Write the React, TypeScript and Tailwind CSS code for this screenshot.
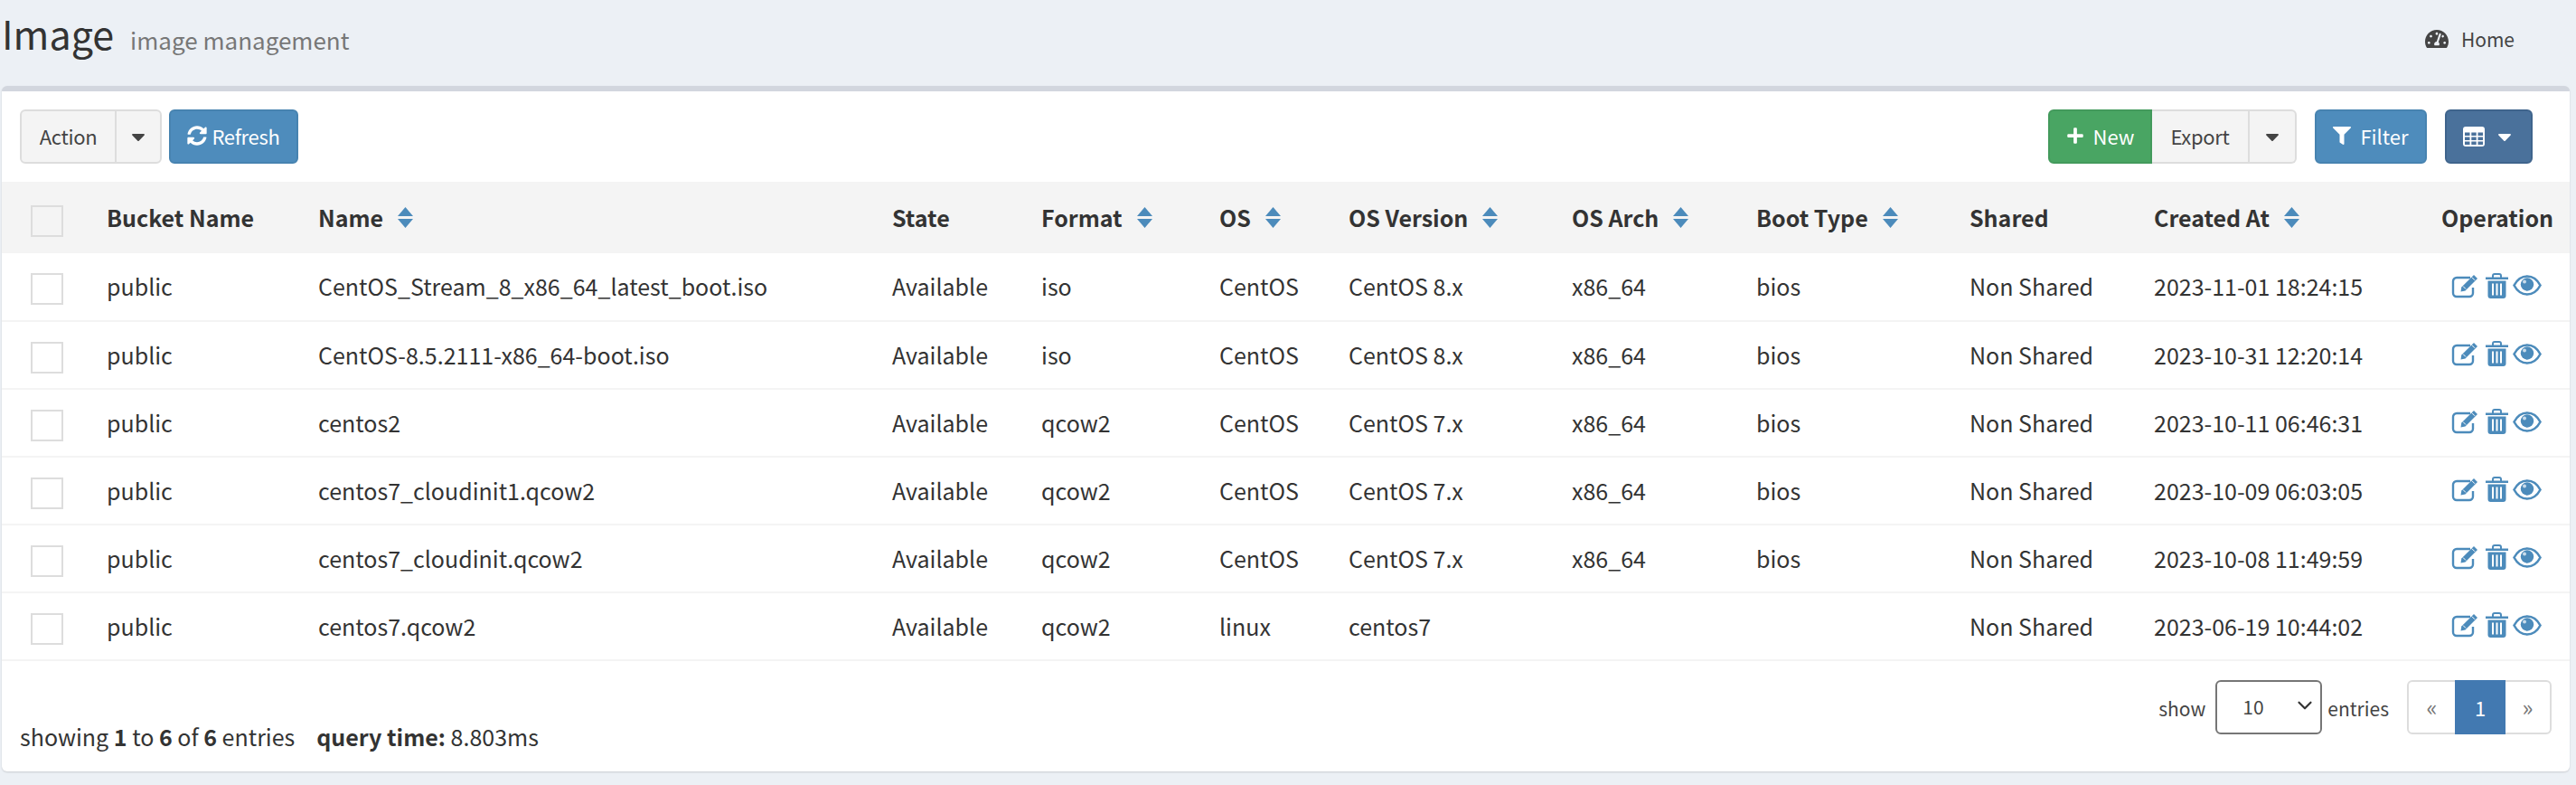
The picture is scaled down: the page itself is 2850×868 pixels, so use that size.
import { ChevronDown } from 'lucide-react';
import { FaCaretDown, FaFilter, FaPlus, FaSyncAlt, FaTachometerAlt } from 'react-icons/fa';

const FONT = "font-['Noto_Sans_CJK_SC','Noto_Sans',sans-serif]";

type Row = {
  name: string;
  format: string;
  os: string;
  version: string;
  arch: string;
  boot: string;
  created: string;
};

const rows: Row[] = [
  { name: 'CentOS_Stream_8_x86_64_latest_boot.iso', format: 'iso', os: 'CentOS', version: 'CentOS 8.x', arch: 'x86_64', boot: 'bios', created: '2023-11-01 18:24:15' },
  { name: 'CentOS-8.5.2111-x86_64-boot.iso', format: 'iso', os: 'CentOS', version: 'CentOS 8.x', arch: 'x86_64', boot: 'bios', created: '2023-10-31 12:20:14' },
  { name: 'centos2', format: 'qcow2', os: 'CentOS', version: 'CentOS 7.x', arch: 'x86_64', boot: 'bios', created: '2023-10-11 06:46:31' },
  { name: 'centos7_cloudinit1.qcow2', format: 'qcow2', os: 'CentOS', version: 'CentOS 7.x', arch: 'x86_64', boot: 'bios', created: '2023-10-09 06:03:05' },
  { name: 'centos7_cloudinit.qcow2', format: 'qcow2', os: 'CentOS', version: 'CentOS 7.x', arch: 'x86_64', boot: 'bios', created: '2023-10-08 11:49:59' },
  { name: 'centos7.qcow2', format: 'qcow2', os: 'linux', version: 'centos7', arch: '', boot: '', created: '2023-06-19 10:44:02' },
];

const columns = [
  { label: 'Bucket Name', sort: false },
  { label: 'Name', sort: true },
  { label: 'State', sort: false },
  { label: 'Format', sort: true },
  { label: 'OS', sort: true },
  { label: 'OS Version', sort: true },
  { label: 'OS Arch', sort: true },
  { label: 'Boot Type', sort: true },
  { label: 'Shared', sort: false },
  { label: 'Created At', sort: true },
  { label: 'Operation', sort: false },
];

function SortIcon() {
  return (
    <svg width="17" height="23" viewBox="0 0 17 23" className="ml-[16px] shrink-0">
      <path d="M8.5 0 L17 10 H0 Z M0 13 H17 L8.5 23 Z" fill="#4c8bbb" />
    </svg>
  );
}

function TableIcon() {
  return (
    <svg width="24" height="22" viewBox="0 0 24 22">
      <rect width="24" height="22" rx="3" fill="#ffffff" />
      <path
        d="M2 6.5h5.5v3.5H2z M9.3 6.5h5.4v3.5H9.3z M16.5 6.5H22v3.5h-5.5z M2 11.5h5.5V15H2z M9.3 11.5h5.4V15H9.3z M16.5 11.5H22V15h-5.5z M2 16.5h5.5V20H2z M9.3 16.5h5.4V20H9.3z M16.5 16.5H22V20h-5.5z"
        fill="#4a719b"
      />
    </svg>
  );
}

function EditIcon() {
  return (
    <svg width="31" height="28" viewBox="0 0 31 28" className="shrink-0" fill="none">
      <path d="M21 5H6a4 4 0 0 0-4 4v13a4 4 0 0 0 4 4h14a4 4 0 0 0 4-4v-6" stroke="currentColor" strokeWidth="2.4" />
      <path d="M10.5 20.5l.8-5L25 2l4 4-13.5 13.5z" fill="currentColor" />
      <path d="M13 14.5l3 3M22.8 4.6l3.2 3.2" stroke="#ffffff" strokeWidth="1" />
    </svg>
  );
}

function TrashIcon() {
  return (
    <svg width="25" height="28" viewBox="0 0 25 28" className="ml-[7px] shrink-0" fill="none">
      <path d="M8 5V3a2 2 0 0 1 2-2h5a2 2 0 0 1 2 2v2" stroke="currentColor" strokeWidth="2" />
      <path d="M0 4.5h25V7H0z" fill="currentColor" />
      <path d="M2.5 8.5h20V25a3 3 0 0 1-3 3h-14a3 3 0 0 1-3-3z" fill="currentColor" />
      <path d="M7 11.5h2V24.5H7z M11.5 11.5h2V24.5h-2z M16 11.5h2V24.5h-2z" fill="#ffffff" />
    </svg>
  );
}

function EyeIcon() {
  return (
    <svg width="32" height="23" viewBox="0 0 32 23" className="ml-[5px] shrink-0" fill="none">
      <path
        d="M1.5 11.5C5 5 10 1.5 16 1.5S27 5 30.5 11.5C27 18 22 21.5 16 21.5S5 18 1.5 11.5z"
        stroke="currentColor"
        strokeWidth="2.6"
      />
      <circle cx="16" cy="10.5" r="7.2" fill="currentColor" />
      <circle cx="13" cy="7.5" r="2" fill="#ffffff" fillOpacity="0.7" />
    </svg>
  );
}

function Checkbox({ head = false }: { head?: boolean }) {
  return <div className={`ml-[32px] h-[35px] w-[36px] border-2 border-[#dddddd] ${head ? 'mt-[8px]' : 'mt-[5px]'}`} />;
}

export default function App() {
  return (
    <div className={`${FONT} h-[868px] w-[2850px] overflow-hidden bg-[#ecf0f5] text-[#333333]`}>
      {/* 页头 */}
      <div className="flex h-[95px] items-start justify-between pr-[68px]">
        <div className="flex items-baseline pl-[2px] pt-[6px]">
          <span className="text-[43px] leading-[60px]">Image</span>
          <span className="ml-[18px] text-[26px] leading-[60px] text-[#777777]">image management</span>
        </div>
        <div className="flex items-center pt-[27px] text-[21px] leading-[32px] text-[#444444]">
          <FaTachometerAlt className="text-[26px]" />
          <span className="ml-[14px]">Home</span>
        </div>
      </div>

      {/* 主卡片 */}
      <div className="mx-[2px] h-[758px] w-[2841px] rounded-[6px] border-t-[6px] border-[#d2d6de] bg-white shadow-[0_1px_2px_rgba(0,0,0,0.15)]">
        <div className="flex h-[100px] items-start justify-between pl-[20px] pr-[41px] pt-[20px] text-[22px] leading-[26px]">
          <div className="flex gap-[8px]">
            <div className="flex h-[60px] w-[157px] rounded-[6px] border-2 border-[#dddddd] bg-[#f4f4f4] text-[#444444]">
              <span className="flex w-[105px] items-center justify-center border-r-2 border-[#dddddd] pb-[2px] tracking-[-0.3px]">Action</span>
              <span className="flex flex-1 items-center justify-center"><FaCaretDown className="text-[24px]" /></span>
            </div>
            <div className="flex h-[60px] w-[143px] items-center justify-center rounded-[6px] border-2 border-[#4783b0] bg-[#4e8cbc] pb-[2px] tracking-[-0.3px] text-white">
              <FaSyncAlt className="mr-[5px] text-[22px]" />Refresh
            </div>
          </div>
          <div className="flex">
            <div className="flex h-[60px] w-[115px] items-center justify-center rounded-l-[6px] border-2 border-[#439a5c] bg-[#49a563] pb-[2px] text-white">
              <FaPlus className="mr-[10px] text-[20px]" />New
            </div>
            <div className="flex h-[60px] w-[160px] rounded-r-[6px] border-2 border-l-0 border-[#dddddd] bg-[#f4f4f4] text-[#444444]">
              <span className="flex w-[108px] items-center justify-center border-r-2 border-[#dddddd] pb-[2px] tracking-[-0.3px]">Export</span>
              <span className="flex flex-1 items-center justify-center"><FaCaretDown className="text-[24px]" /></span>
            </div>
            <div className="ml-[20px] flex h-[60px] w-[124px] items-center justify-center rounded-[6px] border-2 border-[#4783b0] bg-[#4e8cbc] pb-[2px] text-white">
              <FaFilter className="mr-[10px] text-[20px]" />Filter
            </div>
            <div className="ml-[20px] flex h-[60px] w-[97px] items-center justify-center rounded-[6px] border-2 border-[#3f648c] bg-[#4a719b] text-white">
              <TableIcon />
              <FaCaretDown className="ml-[10px] text-[24px]" />
            </div>
          </div>
        </div>

        <table className="w-[2841px] table-fixed border-collapse text-[25px]">
          <colgroup>
            <col className="w-[116px]" />
            <col className="w-[234px]" />
            <col className="w-[635px]" />
            <col className="w-[165px]" />
            <col className="w-[197px]" />
            <col className="w-[143px]" />
            <col className="w-[247px]" />
            <col className="w-[204px]" />
            <col className="w-[236px]" />
            <col className="w-[204px]" />
            <col className="w-[318px]" />
            <col className="w-[142px]" />
          </colgroup>
          <thead>
            <tr className="h-[79px] bg-[#f4f4f4]">
              <th className="p-0"><Checkbox head /></th>
              {columns.map((c) => (
                <th key={c.label} className="p-0 text-left font-bold">
                  <div className="flex items-center whitespace-nowrap">
                    {c.label}
                    {c.sort && <SortIcon />}
                  </div>
                </th>
              ))}
            </tr>
          </thead>
          <tbody>
            {rows.map((r) => (
              <tr key={r.name} className="h-[75px] border-b-2 border-[#f4f4f4]">
                <td className="p-0"><Checkbox /></td>
                <td className="p-0">public</td>
                <td className="p-0">{r.name}</td>
                <td className="p-0">Available</td>
                <td className="p-0">{r.format}</td>
                <td className="p-0">{r.os}</td>
                <td className="p-0">{r.version}</td>
                <td className="p-0">{r.arch}</td>
                <td className="p-0">{r.boot}</td>
                <td className="p-0">Non Shared</td>
                <td className="p-0">{r.created}</td>
                <td className="p-0">
                  <div className="flex items-center pb-[3px] pl-[11px] text-[#4c8bbb]">
                    <EditIcon />
                    <TrashIcon />
                    <EyeIcon />
                  </div>
                </td>
              </tr>
            ))}
          </tbody>
        </table>

        <div className="flex items-start justify-between pl-[20px] pr-[20px] pt-[21px] text-[25px]">
          <div className="pt-[44px] leading-[36px]">
            showing <b>1</b> to <b>6</b> of <b>6</b> entries
            <b className="ml-[24px]">query time:</b> 8.803ms
          </div>
          <div className="flex items-center text-[21px]">
            <span className="mr-[11px] pt-[3px] text-[#444444]">show</span>
            <div className="relative h-[60px] w-[118px]">
              <select className="h-full w-full appearance-none rounded-[6px] border-2 border-[#767676] bg-white pl-[28px] text-[#444444]" defaultValue="10">
                <option value="10">10</option>
              </select>
              <ChevronDown className="absolute right-[6px] top-[15px] h-[26px] w-[26px] text-[#333333]" strokeWidth={2} />
            </div>
            <span className="ml-[6px] pt-[3px] text-[#444444]">entries</span>
            <div className="ml-[20px] flex h-[60px] w-[160px] rounded-[6px] border-2 border-[#dddddd] text-[25px] text-[#777777]">
              <span className="flex w-[51px] items-center justify-center">«</span>
              <span className="my-[-2px] flex w-[56px] items-center justify-center bg-[#4279b1] text-[22px] text-white">1</span>
              <span className="flex flex-1 items-center justify-center">»</span>
            </div>
          </div>
        </div>
      </div>
    </div>
  );
}
